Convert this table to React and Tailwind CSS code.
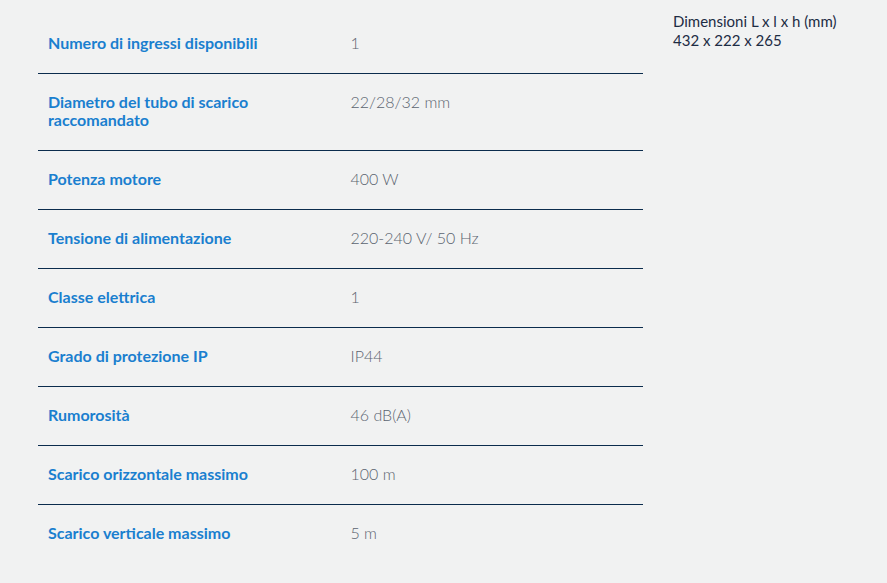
const rows = [
  ["Numero di ingressi disponibili", "1"],
  ["Diametro del tubo di scarico raccomandato", "22/28/32 mm"],
  ["Potenza motore", "400 W"],
  ["Tensione di alimentazione", "220-240 V/ 50 Hz"],
  ["Classe elettrica", "1"],
  ["Grado di protezione IP", "IP44"],
  ["Rumorosità", "46 dB(A)"],
  ["Scarico orizzontale massimo", "100 m"],
  ["Scarico verticale massimo", "5 m"],
];

export default function App() {
  return (
    <div className="min-h-[583px] w-[887px] bg-[#f1f2f2] font-['Lato',sans-serif] flex pl-[38px] pt-[15px] pb-[20px]">
      <div className="w-[605px] shrink-0">
        {rows.map(([label, value], i) => (
          <div
            key={label}
            className={
              "grid grid-cols-2 pt-[19px] pb-[21px] text-[16px] leading-[18px] " +
              (i < rows.length - 1 ? "border-b border-[#0b2c4d]" : "")
            }
          >
            <div className="px-[10px] font-bold text-[#1a7fcf] pr-[30px]">{label}</div>
            <div className="px-[10px] font-light text-[#5b6470]">{value}</div>
          </div>
        ))}
      </div>
      <div className="ml-[30px] -mt-[3px] text-[15px] leading-[19px] text-[#1d2c44]">
        <div>Dimensioni L x l x h (mm)</div>
        <div>432 x 222 x 265</div>
      </div>
    </div>
  );
}
